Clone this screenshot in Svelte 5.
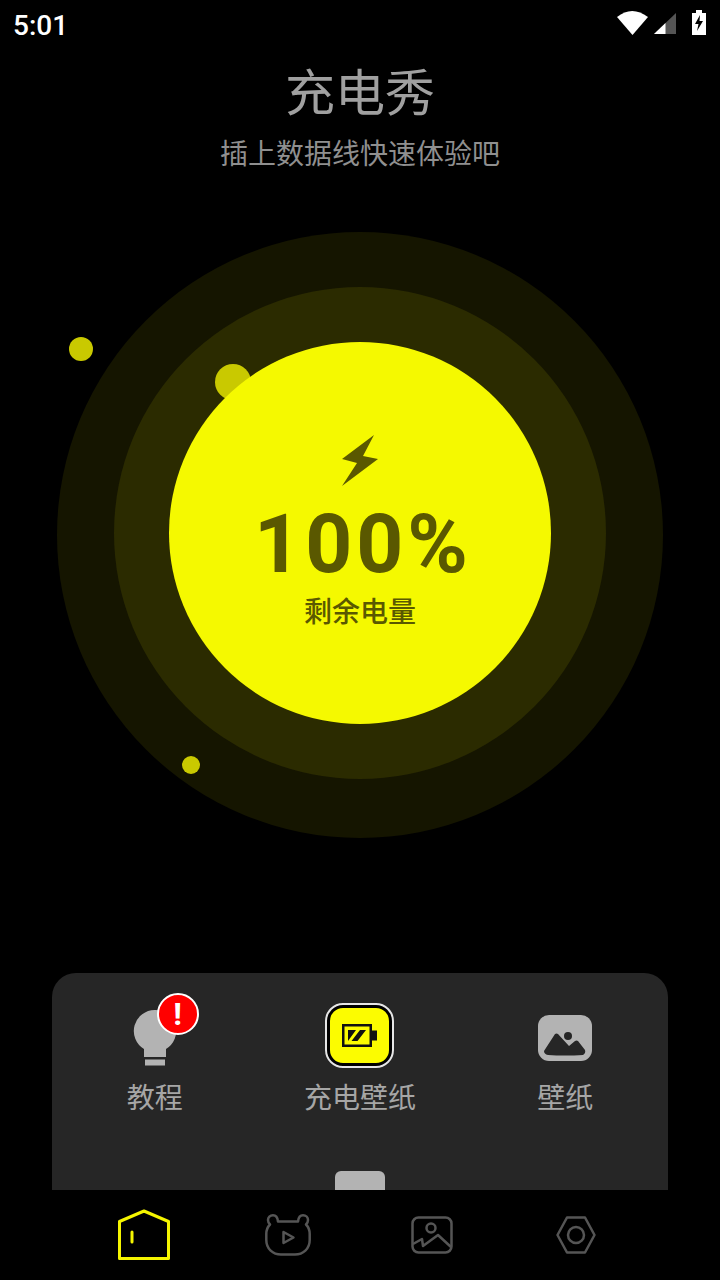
<script>
	const tools = [
		{ id: 'guide', label: '教程' },
		{ id: 'charge', label: '充电壁纸' },
		{ id: 'wall', label: '壁纸' }
	];
</script>

<main class="page">
	<header class="status">
		<span class="time">5:01</span>
		<div class="status-icons">
			<svg width="32" height="26" viewBox="0 0 32 26">
				<path d="M0 8Q15 -4 31 8L15.500 26Z" fill="#fff" />
			</svg>
			<svg width="22" height="22" viewBox="0 0 22 22">
				<path d="M0 21 22 0V21Z" fill="#555" />
				<path d="M0 21 11.500 10V21Z" fill="#fff" />
			</svg>
			<svg width="14" height="25" viewBox="0 0 14 25">
				<path d="M0 3H4V0H10V3H14V25H0Z" fill="#fff" />
				<path d="M8 5 3 14H6.500L5 21 11 11H7.500Z" fill="#000" />
			</svg>
		</div>
	</header>

	<section class="heading">
		<h1>充电秀</h1>
		<p>插上数据线快速体验吧</p>
	</section>

	<section class="stage">
		<div class="ring outer">
			<div class="ring middle">
				<span class="dot dot-large"></span>
				<div class="ring core">
					<svg class="bolt" width="36" height="52" viewBox="0 0 36 52">
						<path d="M32 0 0 24 15 28 0 51 36 24 21 21Z" fill="#5a5800" />
					</svg>
					<div class="percent">100%</div>
					<div class="remain">剩余电量</div>
				</div>
			</div>
		</div>
		<span class="dot dot-left"></span>
		<span class="dot dot-small"></span>
	</section>

	<section class="panel">
		<div class="tools">
			{#each tools as tool}
				<div class="tool">
					<div class="tool-icon">
						{#if tool.id === 'guide'}
							<svg class="low" width="44" height="56" viewBox="0 0 44 56">
								<path d="M22 0A21 21 0 0 1 33 39V47H11V39A21 21 0 0 1 22 0Z" fill="#b3b3b3" />
								<rect x="12" y="49.500" width="20" height="6" fill="#b3b3b3" />
							</svg>
							<span class="badge">!</span>
						{:else if tool.id === 'charge'}
							<div class="tile">
								<svg width="35" height="23" viewBox="0 0 35 23">
									<rect x="1.250" y="1.250" width="27.500" height="20.500" fill="none" stroke="#111" stroke-width="2.500" />
									<rect x="30" y="6.500" width="5" height="10" fill="#111" />
									<path d="M6 6H14L6 17ZM18 6H24L15.500 17H9.500Z" fill="#111" />
								</svg>
							</div>
						{:else}
							<svg class="low" width="54" height="46" viewBox="0 0 54 46">
								<rect width="54" height="46" rx="11" fill="#b3b3b3" />
								<path d="M6 36 17 19Q18.500 18 20 19L31 31 37 26Q38.500 25 40 26L47 35Q48 38 45 40 27 41 10 40 6 39 6 36Z" fill="#262626" />
								<circle cx="30" cy="21" r="4" fill="#262626" />
							</svg>
						{/if}
					</div>
					<span class="tool-label">{tool.label}</span>
				</div>
			{/each}
		</div>
		<div class="handle"></div>
	</section>

	<nav class="tabs">
		<div class="tab">
			<svg width="52" height="52" viewBox="0 0 52 52">
				<path d="M26 2 1.500 12.500V49.500H50.500V12.500Z" fill="none" stroke="#f5f500" stroke-width="3" stroke-linejoin="round" />
				<path d="M14 23V33" stroke="#f5f500" stroke-width="3" stroke-linecap="round" />
			</svg>
		</div>
		<div class="tab">
			<svg width="46" height="42" viewBox="0 0 46 42">
				<path d="M13 7.500H33C33.500 3 36 1.300 38 1.300 41 1.300 43 3.500 43 6 43 8 42 9.500 41 10.500 43.500 13 44.700 16 44.700 20V26C44.700 35 38 40.500 30 40.500H16C8 40.500 1.300 35 1.300 26V20C1.300 16 2.500 13 5 10.500 4 9.500 3 8 3 6 3 3.500 5 1.300 8 1.300 10 1.300 12.500 3 13 7.500Z" fill="none" stroke="#555" stroke-width="2.500" stroke-linejoin="round" />
				<path d="M18.500 18 28.500 23.500 18.500 29Z" fill="none" stroke="#555" stroke-width="2.500" stroke-linejoin="round" />
			</svg>
		</div>
		<div class="tab">
			<svg width="42" height="38" viewBox="0 0 42 38">
				<rect x="1.500" y="1.500" width="39" height="35" rx="6" fill="none" stroke="#555" stroke-width="2.500" />
				<circle cx="20" cy="12" r="4.500" fill="none" stroke="#555" stroke-width="2.500" />
				<path d="M2 28 11 23 12 30 27 19 40 31" fill="none" stroke="#555" stroke-width="2.500" stroke-linejoin="round" />
			</svg>
		</div>
		<div class="tab">
			<svg width="40" height="38" viewBox="0 0 40 38">
				<path d="M11 1.500H29L38.500 19 29 36.500H11L1.500 19Z" fill="none" stroke="#555" stroke-width="2.500" stroke-linejoin="round" />
				<circle cx="20" cy="19" r="8" fill="none" stroke="#555" stroke-width="2.500" />
			</svg>
		</div>
	</nav>
</main>

<style>
	:global(body) {
		background: #000;
	}
	.page {
		display: flex;
		flex-direction: column;
		height: 1280px;
		background: #000;
		font-family: Roboto, "Noto Sans CJK SC", sans-serif;
		overflow: hidden;
	}
	.status {
		display: flex;
		justify-content: space-between;
		align-items: center;
		height: 50px;
		padding: 0 14px 0 13px;
		color: #fff;
	}
	.time {
		font-size: 28px;
		font-weight: 500;
	}
	.status-icons {
		display: flex;
		align-items: flex-end;
		gap: 5px;
		box-sizing: border-box;
		height: 50px;
		padding-bottom: 15px;
	}
	.status-icons svg:last-child {
		margin-left: 11px;
	}
	.heading {
		display: flex;
		flex-direction: column;
		align-items: center;
		padding-top: 9px;
		color: #a0a0a0;
	}
	h1 {
		margin: 0;
		font-size: 50px;
		font-weight: 400;
		line-height: 70px;
	}
	p {
		margin: 0;
		font-size: 28px;
		line-height: 52px;
		color: #8f8f8f;
	}
	.stage {
		position: relative;
		display: flex;
		justify-content: center;
		padding-top: 51px;
		height: 792px;
		box-sizing: border-box;
	}
	.ring {
		display: flex;
		align-items: center;
		justify-content: center;
		border-radius: 50%;
		position: relative;
	}
	.outer {
		width: 606px;
		height: 606px;
		background: #151500;
	}
	.middle {
		width: 492px;
		height: 492px;
		margin-bottom: 4px;
		background: #2b2b00;
	}
	.core {
		width: 382px;
		height: 382px;
		box-sizing: border-box;
		flex-direction: column;
		justify-content: flex-start;
		padding-top: 93px;
		background: #f5f900;
	}
	.percent {
		margin-top: 12px;
		padding-left: 6px;
		font-size: 82px;
		font-weight: 700;
		line-height: 90px;
		letter-spacing: 4px;
		color: #5a5800;
	}
	.remain {
		margin-top: 4px;
		font-size: 28px;
		font-weight: 500;
		line-height: 40px;
		color: #5a5800;
	}
	.dot {
		position: absolute;
		border-radius: 50%;
		background: #c9c900;
	}
	.dot-large {
		left: 101px;
		top: 77px;
		width: 36px;
		height: 36px;
	}
	.dot-left {
		left: 69px;
		top: 156px;
		width: 24px;
		height: 24px;
	}
	.dot-small {
		left: 182px;
		top: 575px;
		width: 18px;
		height: 18px;
	}
	.panel {
		display: flex;
		flex-direction: column;
		justify-content: space-between;
		align-items: center;
		height: 217px;
		margin: 0 52px;
		border-radius: 24px 24px 0 0;
		background: #262626;
	}
	.tools {
		display: grid;
		grid-template-columns: repeat(3, 1fr);
		width: 100%;
		padding-top: 29px;
	}
	.tool {
		display: flex;
		flex-direction: column;
		align-items: center;
		gap: 11px;
	}
	.tool-icon {
		position: relative;
		display: flex;
		align-items: center;
		justify-content: center;
		height: 66px;
	}
	.low {
		margin-top: 6px;
	}
	.tool-label {
		font-size: 28px;
		line-height: 40px;
		color: #a6a6a6;
	}
	.badge {
		position: absolute;
		left: 24px;
		top: -9px;
		width: 38px;
		height: 38px;
		border: 2px solid #fff;
		border-radius: 50%;
		background: #f00;
		color: #fff;
		font-size: 32px;
		font-weight: 700;
		line-height: 38px;
		text-align: center;
	}
	.tile {
		display: flex;
		align-items: center;
		justify-content: center;
		box-sizing: border-box;
		width: 69px;
		height: 65px;
		border: 5px solid #000;
		border-radius: 18px;
		outline: 2px solid #e6e6e6;
		outline-offset: -2px;
		background: #fcfc00;
	}
	.handle {
		width: 50px;
		height: 19px;
		border-radius: 6px 6px 0 0;
		background: #b3b3b3;
	}
	.tabs {
		display: grid;
		grid-template-columns: repeat(4, 144px);
		flex: 1;
		padding: 0 72px;
	}
	.tab {
		display: flex;
		align-items: center;
		justify-content: center;
	}
</style>
